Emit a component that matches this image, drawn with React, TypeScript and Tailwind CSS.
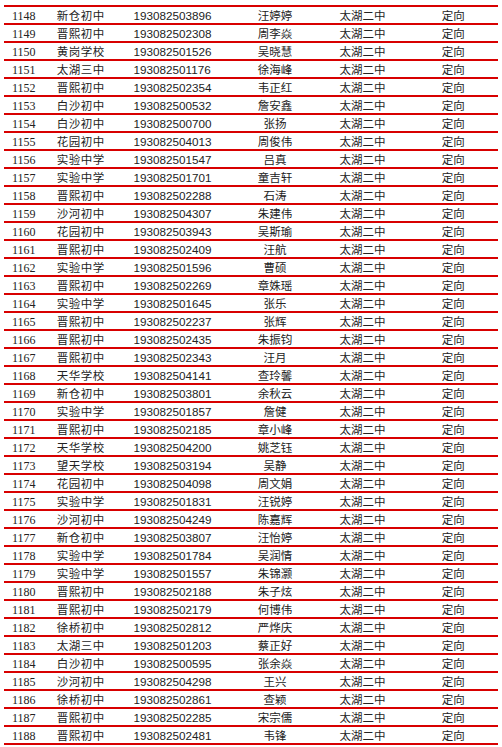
const rows: [string, string, string, string][] = [
  ['1148', '新仓初中', '193082503896', '汪婷婷'],
  ['1149', '晋熙初中', '193082502308', '周李焱'],
  ['1150', '黄岗学校', '193082501526', '吴晓慧'],
  ['1151', '太湖三中', '193082501176', '徐海峰'],
  ['1152', '晋熙初中', '193082502354', '韦正红'],
  ['1153', '白沙初中', '193082500532', '詹安鑫'],
  ['1154', '白沙初中', '193082500700', '张扬'],
  ['1155', '花园初中', '193082504013', '周俊伟'],
  ['1156', '实验中学', '193082501547', '吕真'],
  ['1157', '实验中学', '193082501701', '童吉轩'],
  ['1158', '晋熙初中', '193082502288', '石涛'],
  ['1159', '沙河初中', '193082504307', '朱建伟'],
  ['1160', '花园初中', '193082503943', '吴斯瑜'],
  ['1161', '晋熙初中', '193082502409', '汪航'],
  ['1162', '实验中学', '193082501596', '曹硕'],
  ['1163', '晋熙初中', '193082502269', '章姝瑶'],
  ['1164', '实验中学', '193082501645', '张乐'],
  ['1165', '晋熙初中', '193082502237', '张辉'],
  ['1166', '晋熙初中', '193082502435', '朱振钧'],
  ['1167', '晋熙初中', '193082502343', '汪月'],
  ['1168', '天华学校', '193082504141', '查玲馨'],
  ['1169', '新仓初中', '193082503801', '余秋云'],
  ['1170', '实验中学', '193082501857', '詹健'],
  ['1171', '晋熙初中', '193082502185', '章小峰'],
  ['1172', '天华学校', '193082504200', '姚芝钰'],
  ['1173', '望天学校', '193082503194', '吴静'],
  ['1174', '花园初中', '193082504098', '周文娟'],
  ['1175', '实验中学', '193082501831', '汪锐婷'],
  ['1176', '沙河初中', '193082504249', '陈嘉辉'],
  ['1177', '新仓初中', '193082503807', '汪怡婷'],
  ['1178', '实验中学', '193082501784', '吴润情'],
  ['1179', '实验中学', '193082501557', '朱锦灏'],
  ['1180', '晋熙初中', '193082502188', '朱子炫'],
  ['1181', '晋熙初中', '193082502179', '何博伟'],
  ['1182', '徐桥初中', '193082502812', '严烨庆'],
  ['1183', '太湖三中', '193082501203', '蔡正好'],
  ['1184', '白沙初中', '193082500595', '张余焱'],
  ['1185', '沙河初中', '193082504298', '王兴'],
  ['1186', '徐桥初中', '193082502861', '查颖'],
  ['1187', '晋熙初中', '193082502285', '宋宗儒'],
  ['1188', '晋熙初中', '193082502481', '韦锋'],
];

const cjk = "font-['Noto_Sans_CJK_SC',sans-serif]";

export default function App() {
  return (
    <div className="w-[502px] h-[747px] bg-white pt-[5px] pl-[4px] overflow-hidden">
      <div className="w-[494px] border-t-2 border-[#d80000] text-[#222]">
        {rows.map(([no, school, id, name]) => (
          <div key={no} className="flex items-center h-[18px] border-b-2 border-[#d80000] pt-[1px]">
            <div className="w-[53px] pl-[8px] font-['Liberation_Serif',serif] text-[12px]">{no}</div>
            <div className={`w-[77px] ${cjk} text-[11.5px] tracking-[0.5px]`}>{school}</div>
            <div className="w-[100px] font-['Liberation_Sans',sans-serif] text-[11.7px]">{id}</div>
            <div className={`w-[84px] text-center ${cjk} text-[11.5px]`}>{name}</div>
            <div className={`w-[92px] text-center ${cjk} text-[11.5px]`}>{'太湖二中'}</div>
            <div className={`w-[90px] text-center ${cjk} text-[11.5px]`}>{'定向'}</div>
          </div>
        ))}
      </div>
    </div>
  );
}
